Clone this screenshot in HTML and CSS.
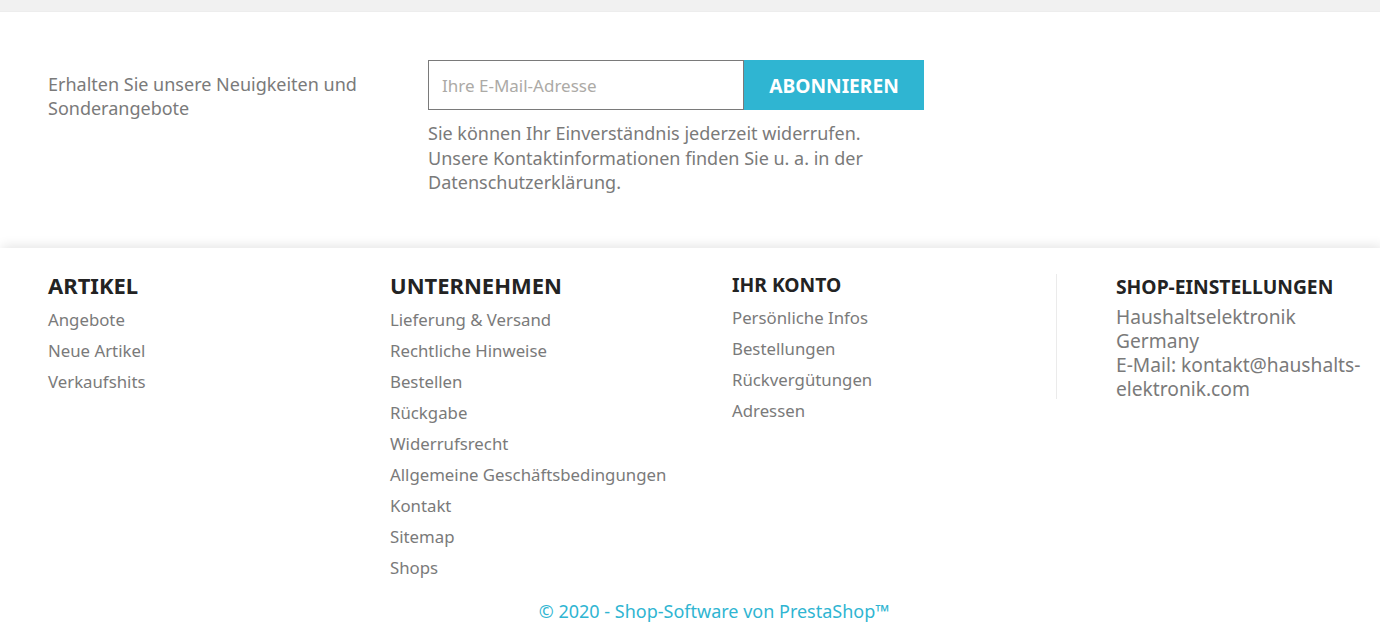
FILE: index.html
```html
<!DOCTYPE html>
<html lang="de">
<head>
  <meta charset="UTF-8" />
  <meta name="viewport" content="width=device-width, initial-scale=1.0"/>
  <title>Haushaltselektronik</title>
  <link rel="stylesheet" href="styles.css">
</head>
<body>
  <div class="top-band"></div>

  <section class="newsletter">
    <p class="newsletter-title">Erhalten Sie unsere Neuigkeiten und Sonderangebote</p>
    <div class="newsletter-form">
      <form class="subscribe" onsubmit="return false;">
        <input type="text" placeholder="Ihre E-Mail-Adresse" />
        <button type="submit">ABONNIEREN</button>
      </form>
      <p class="newsletter-note">Sie können Ihr Einverständnis jederzeit widerrufen. Unsere Kontaktinformationen finden Sie u. a. in der Datenschutzerklärung.</p>
    </div>
  </section>

  <footer class="footer">
    <div class="footer-cols">
      <div class="footer-col">
        <h3 class="col-title">ARTIKEL</h3>
        <ul class="link-list">
          <li><a href="#">Angebote</a></li>
          <li><a href="#">Neue Artikel</a></li>
          <li><a href="#">Verkaufshits</a></li>
        </ul>
      </div>
      <div class="footer-col">
        <h3 class="col-title">UNTERNEHMEN</h3>
        <ul class="link-list">
          <li><a href="#">Lieferung &amp; Versand</a></li>
          <li><a href="#">Rechtliche Hinweise</a></li>
          <li><a href="#">Bestellen</a></li>
          <li><a href="#">Rückgabe</a></li>
          <li><a href="#">Widerrufsrecht</a></li>
          <li><a href="#">Allgemeine Geschäftsbedingungen</a></li>
          <li><a href="#">Kontakt</a></li>
          <li><a href="#">Sitemap</a></li>
          <li><a href="#">Shops</a></li>
        </ul>
      </div>
      <div class="footer-col account">
        <h3 class="col-title small">IHR KONTO</h3>
        <ul class="link-list">
          <li><a href="#">Persönliche Infos</a></li>
          <li><a href="#">Bestellungen</a></li>
          <li><a href="#">Rückvergütungen</a></li>
          <li><a href="#">Adressen</a></li>
        </ul>
      </div>
      <div class="footer-col contact">
        <h3 class="col-title small">SHOP-EINSTELLUNGEN</h3>
        <p class="contact-info">Haushaltselektronik<br>Germany<br>E-Mail: kontakt@haushalts-<br>elektronik.com</p>
      </div>
    </div>
    <p class="copyright"><a href="#">© 2020 - Shop-Software von PrestaShop™</a></p>
  </footer>
</body>
</html>
```

FILE: styles.css
```css
body {
  margin: 0;
  font-family: "Noto Sans", "Open Sans", sans-serif;
  color: #7a7a7a;
  background-color: #fff;
}
a {
  color: #7a7a7a;
  text-decoration: none;
}
.top-band {
  height: 11px;
  background-color: #f1f1f1;
  border-bottom: 1px solid #ededed;
}
.newsletter {
  display: flex;
  padding: 48px 0 53px 48px;
}
.newsletter-title {
  width: 380px;
  margin: 0;
  padding-top: 12px;
  font-size: 18px;
  line-height: 24px;
}
.newsletter-form {
  width: 496px;
}
.subscribe {
  display: flex;
  margin: 0;
}
.subscribe input {
  width: 316px;
  height: 50px;
  box-sizing: border-box;
  border: 1px solid #7a7a7a;
  padding: 1px 13px 0;
  font-family: inherit;
  font-size: 17px;
  color: #7a7a7a;
  outline: none;
}
.subscribe input::placeholder {
  color: #acaaa6;
}
.subscribe button {
  width: 180px;
  height: 50px;
  border: none;
  background-color: #2fb5d2;
  color: #fff;
  font-family: inherit;
  font-weight: 700;
  font-size: 19.2px;
  padding: 1px 0 0;
  cursor: pointer;
}
.newsletter-note {
  margin: 11px 0 0;
  font-size: 18px;
  line-height: 24.5px;
  width: 460px;
}
.footer {
  position: relative;
  background-color: #fff;
  box-shadow: 2px -2px 11px 0 rgba(0, 0, 0, 0.11);
  padding: 24px 0 0 48px;
}
.footer-cols {
  display: flex;
  align-items: flex-start;
}
.footer-col {
  width: 342px;
}
.footer-col.account {
  width: 324px;
}
.footer-col.contact {
  width: auto;
  border-left: 1px solid #ebebeb;
  padding-left: 59px;
  height: 125px;
  margin-top: 2px;
}
.col-title {
  margin: 0 0 6px;
  font-size: 22px;
  line-height: 26px;
  font-weight: 700;
  color: #232323;
}
.col-title.small {
  font-size: 19.3px;
  line-height: 24px;
  margin-top: 1px;
  margin-bottom: 5px;
}
.contact .col-title.small {
  margin-bottom: 6px;
}
.link-list {
  list-style: none;
  margin: 0;
  padding: 0;
}
.link-list li {
  font-size: 16.8px;
  line-height: 31px;
}
.contact-info {
  margin: 0;
  font-size: 19.2px;
  line-height: 24px;
  white-space: nowrap;
}
.copyright {
  margin: 16px 0 0;
  padding-bottom: 10px;
  text-align: center;
  font-size: 18px;
  line-height: 24px;
}
.copyright a {
  color: #2fb5d2;
}
```
